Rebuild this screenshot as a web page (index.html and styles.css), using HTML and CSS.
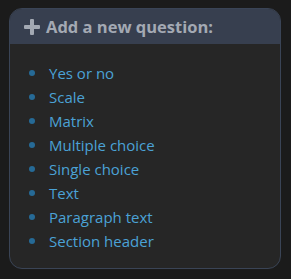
FILE: index.html
```html
<!DOCTYPE html>
<html lang="en">
<head>
    <meta charset="UTF-8">
    <title>Add a new question</title>
    <link rel="stylesheet" href="styles.css">
</head>
<body>
    <div class="panel">
        <!--header-->
        <div class="panel-head">
            <svg class="plus" width="16" height="16" viewBox="0 0 16 16">
                <rect x="6" y="0" width="4" height="16" rx="1"></rect>
                <rect x="0" y="6" width="16" height="4" rx="1"></rect>
            </svg>
            <span>Add a new question:</span>
        </div>
        <!--question types-->
        <ul class="type-list">
            <li><a href="javascript:;">Yes or no</a></li>
            <li><a href="javascript:;">Scale</a></li>
            <li><a href="javascript:;">Matrix</a></li>
            <li><a href="javascript:;">Multiple choice</a></li>
            <li><a href="javascript:;">Single choice</a></li>
            <li><a href="javascript:;">Text</a></li>
            <li><a href="javascript:;">Paragraph text</a></li>
            <li><a href="javascript:;">Section header</a></li>
        </ul>
    </div>
</body>
</html>
```

FILE: styles.css
```css
* {
    margin: 0;
    padding: 0;
    box-sizing: border-box;
}

body {
    background-color: #1b1b1b;
    font-family: "Open Sans", "Noto Sans", sans-serif;
    padding: 8px 10px 10px 9px;
}

.panel {
    width: 272px;
    height: 261px;
    background-color: #262626;
    border: 1px solid #3a4456;
    border-radius: 13px;
    overflow: hidden;
}

.panel-head {
    display: flex;
    align-items: center;
    gap: 6px;
    height: 35px;
    padding-left: 14px;
    background-color: #373f4f;
    color: #a3a9b3;
    font-size: 16.5px;
    font-weight: bold;
}

.plus {
    fill: #a3a9b3;
    flex-shrink: 0;
}

.type-list {
    list-style: none;
    padding: 17px 0 0 19px;
}

.type-list li {
    display: flex;
    align-items: center;
    height: 24px;
}

.type-list li::before {
    content: "";
    width: 6px;
    height: 6px;
    margin-right: 14px;
    border-radius: 50%;
    background-color: #266a96;
}

.type-list a {
    color: #4ba2d6;
    font-size: 15px;
    text-decoration: none;
}
```
